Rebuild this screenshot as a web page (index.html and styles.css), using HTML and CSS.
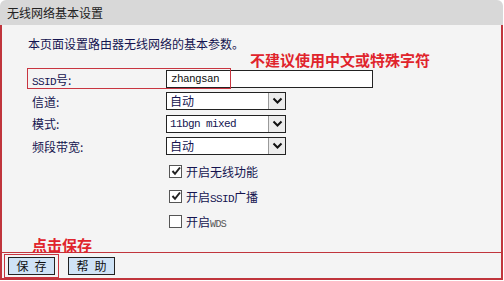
FILE: index.html
```html
<!DOCTYPE html>
<html lang="zh-CN">
<head>
  <meta charset="UTF-8" />
  <title>无线网络基本设置</title>
  <link rel="stylesheet" href="styles.css">
</head>
<body>

  <div class="panel">
    <div class="panel-title">无线网络基本设置</div>

    <div class="panel-body">
      <p class="intro">本页面设置路由器无线网络的基本参数。</p>
      <p class="note">不建议使用中文或特殊字符</p>

      <div class="form">
        <div class="row ssid-row">
          <label class="field-label"><span class="latin">SSID</span>号:</label>
          <div class="text-input">zhangsan</div>
          <span class="mark-box"></span>
        </div>

        <div class="row">
          <label class="field-label">信道:</label>
          <div class="select">
            <span class="select-value">自动</span>
            <span class="select-arrow">
              <svg width="11" height="8" viewBox="0 0 11 8"><path d="M1.5 1.5 L5.5 5.5 L9.5 1.5" fill="none" stroke="#111" stroke-width="2"/></svg>
            </span>
          </div>
        </div>

        <div class="row">
          <label class="field-label">模式:</label>
          <div class="select">
            <span class="select-value latin">11bgn mixed</span>
            <span class="select-arrow">
              <svg width="11" height="8" viewBox="0 0 11 8"><path d="M1.5 1.5 L5.5 5.5 L9.5 1.5" fill="none" stroke="#111" stroke-width="2"/></svg>
            </span>
          </div>
        </div>

        <div class="row">
          <label class="field-label">频段带宽:</label>
          <div class="select">
            <span class="select-value">自动</span>
            <span class="select-arrow">
              <svg width="11" height="8" viewBox="0 0 11 8"><path d="M1.5 1.5 L5.5 5.5 L9.5 1.5" fill="none" stroke="#111" stroke-width="2"/></svg>
            </span>
          </div>
        </div>
      </div>

      <div class="checks">
        <div class="check-row">
          <span class="checkbox checked">
            <svg width="10" height="10" viewBox="0 0 10 10"><path d="M1.5 5 L4 7.8 L9 1.5" fill="none" stroke="#222" stroke-width="2"/></svg>
          </span>
          <span>开启无线功能</span>
        </div>
        <div class="check-row">
          <span class="checkbox checked">
            <svg width="10" height="10" viewBox="0 0 10 10"><path d="M1.5 5 L4 7.8 L9 1.5" fill="none" stroke="#222" stroke-width="2"/></svg>
          </span>
          <span>开启<span class="latin">SSID</span>广播</span>
        </div>
        <div class="check-row">
          <span class="checkbox"></span>
          <span>开启<span class="latin small">WDS</span></span>
        </div>
      </div>

      <p class="note save-note">点击保存</p>
    </div>

    <div class="panel-footer">
      <span class="mark-btn"><button class="btn">保存</button></span>
      <button class="btn">帮助</button>
    </div>
  </div>

</body>
</html>
```

FILE: styles.css
```css
body {
  margin: 0;
  background: #fff;
  font-family: "Noto Sans CJK SC", "Noto Sans", sans-serif;
  font-size: 12px;
  color: #141450;
}

.panel {
  width: 503px;
}

.panel-title {
  height: 25px;
  line-height: 25px;
  padding-left: 7px;
  background: #d8d8d8;
  border-radius: 6px 6px 0 0;
  color: #222;
}

.panel-body {
  height: 227px;
  box-sizing: border-box;
  padding: 11px 0 0 26px;
  background: #f4f4f4;
  border-left: 2px solid #c0353c;
  border-right: 2px solid #c0353c;
}

.intro {
  margin: 0;
  line-height: 16px;
}

.note {
  margin: 0;
  padding-left: 222px;
  line-height: 16px;
  font-size: 15px;
  font-weight: bold;
  color: #e0242c;
}

.latin {
  font-family: "Liberation Mono", monospace;
  font-size: 11px;
  letter-spacing: -0.6px;
}

.latin.small {
  font-size: 10px;
  color: #555;
}

/* form rows */
.form {
  display: flex;
  flex-direction: column;
}

.row {
  position: relative;
  display: grid;
  grid-template-columns: 138px auto;
  align-items: center;
  height: 22px;
}

.row + .row {
  height: 22.5px;
}

.field-label {
  padding-left: 4px;
}

.mark-box {
  position: absolute;
  left: -1px;
  top: 0;
  width: 202px;
  height: 19px;
  border: 1px solid #c83540;
}

.text-input {
  width: 201px;
  height: 16px;
  line-height: 16px;
  padding-left: 4px;
  font-family: "Liberation Mono", monospace;
  font-size: 11px;
  letter-spacing: -0.6px;
  color: #111;
  background: #fff;
  border: 1px solid #222;
}

.select {
  display: flex;
  width: 118px;
  height: 16px;
  background: #fff;
  border: 1px solid #222;
}

.select-value {
  flex: 1;
  padding-left: 3px;
  line-height: 16px;
}

.select-arrow {
  width: 16px;
  display: flex;
  align-items: center;
  justify-content: center;
  background: #ececec;
  border-left: 1px solid #9a9a9a;
}

/* checkboxes */
.checks {
  display: flex;
  flex-direction: column;
  padding-left: 141px;
  margin-top: 1px;
}

.check-row {
  display: flex;
  align-items: center;
  gap: 4px;
  height: 25px;
}

.checkbox {
  width: 11px;
  height: 11px;
  display: flex;
  align-items: center;
  justify-content: center;
  background: #fff;
  border: 1px solid #555;
}

.save-note {
  padding-left: 4px;
  margin-top: 1px;
  line-height: 20px;
}

/* footer */
.panel-footer {
  display: flex;
  align-items: center;
  gap: 9px;
  height: 25px;
  padding-left: 2px;
  background: #f4f4f4;
  border: 2px solid #c0353c;
  border-top: 1px solid #c0353c;
}

.mark-btn {
  display: flex;
  padding: 2px 3px;
  border: 1px solid #c83540;
}

.btn {
  width: 47px;
  height: 18px;
  padding: 0 0 0 6px;
  white-space: nowrap;
  font-family: "Noto Sans CJK SC", sans-serif;
  font-size: 12px;
  line-height: 16px;
  letter-spacing: 6px;
  color: #111;
  background: #cfe3f6;
  border: 1px solid #222;
  border-radius: 0;
}
```
